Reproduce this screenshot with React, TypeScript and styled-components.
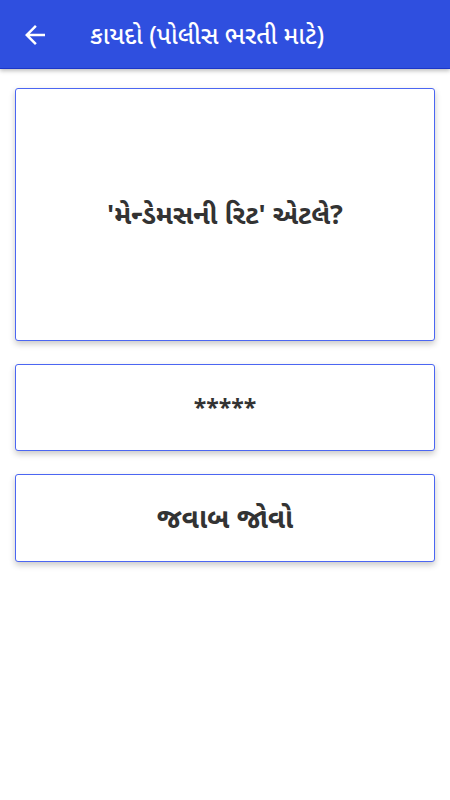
import React from 'react';
import styled, { createGlobalStyle } from 'styled-components';

const GlobalStyle = createGlobalStyle`
    body {
        margin: 0;
        background: #ffffff;
        font-family: "Noto Sans Gujarati", "Noto Sans", Roboto, sans-serif;
    }
`;

const App: React.FC = () => {
    return (
        <>
            <GlobalStyle />
            <Page>
                <AppBar>
                    <BackButton aria-label="back">
                        <svg width="30" height="30" viewBox="0 0 24 24">
                            <path d="M20 11H7.83l5.59-5.59L12 4l-8 8 8 8 1.41-1.41L7.83 13H20v-2z" fill="#ffffff" />
                        </svg>
                    </BackButton>
                    <BarTitle>કાયદો (પોલીસ ભરતી માટે)</BarTitle>
                </AppBar>
                <Content>
                    <Card $height={253}>
                        <CardText $size={27}>'મેન્ડેમસની રિટ' એટલે?</CardText>
                    </Card>
                    <Card $height={87}>
                        <CardText $size={23}>*****</CardText>
                    </Card>
                    <Card $height={88}>
                        <CardText $size={28}>જવાબ જોવો</CardText>
                    </Card>
                </Content>
            </Page>
        </>
    );
};

const Page = styled.div`
    width: 450px;
    min-height: 800px;
    background: #ffffff;
`;

const AppBar = styled.div`
    height: 69px;
    background-color: #2f4fdf;
    display: flex;
    align-items: center;
    padding: 2px 0 0 20px;
    box-sizing: border-box;
    box-shadow: 0 2px 4px rgba(0, 0, 0, 0.25);
    border-bottom: 1px solid #1c36c8;
`;

const BackButton = styled.div`
    width: 30px;
    height: 30px;
    display: flex;
    align-items: center;
    justify-content: center;
    margin-right: 40px;
`;

const BarTitle = styled.div`
    color: #ffffff;
    font-size: 24.5px;
    font-weight: 500;
    padding-top: 5px;
`;

const Content = styled.div`
    display: flex;
    flex-direction: column;
    gap: 23px;
    padding: 19px 15px 0 15px;
`;

const Card = styled.div<{ $height: number }>`
    height: ${(p) => p.$height}px;
    box-sizing: border-box;
    border: 1.5px solid #4b66f2;
    border-radius: 3px;
    background: #ffffff;
    box-shadow: 0 3px 6px rgba(0, 0, 0, 0.22);
    display: flex;
    align-items: center;
    justify-content: center;
`;

const CardText = styled.div<{ $size: number }>`
    color: #333333;
    font-size: ${(p) => p.$size}px;
    font-weight: 700;
    padding-top: 5px;
`;

export default App;
